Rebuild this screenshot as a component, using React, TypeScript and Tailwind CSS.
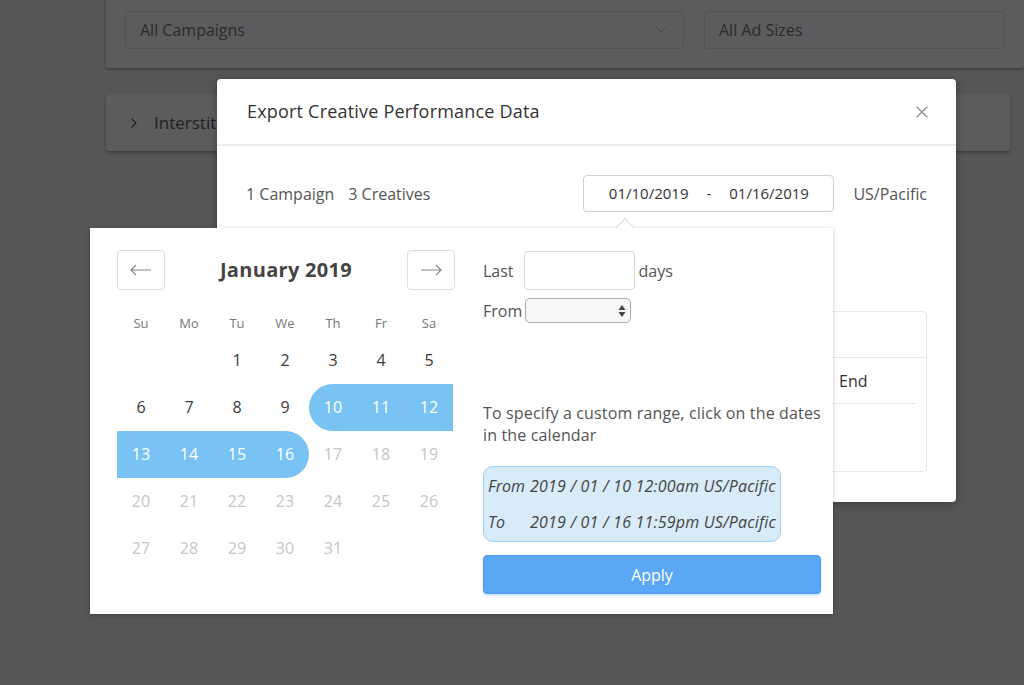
import { ChevronDown, ChevronRight, X } from 'lucide-react';

const weekdays = ['Su', 'Mo', 'Tu', 'We', 'Th', 'Fr', 'Sa'];
const rangeStart = 10;
const rangeEnd = 16;
const activeUntil = 16;

type Cell = number | null;
const cells: Cell[] = [null, null, ...Array.from({ length: 31 }, (_, i) => i + 1)];
const weeks: Cell[][] = [];
for (let i = 0; i < cells.length; i += 7) weeks.push(cells.slice(i, i + 7));

function DayCell({ day }: { day: Cell }) {
  if (day === null) return <div className="h-[47px]" />;
  const inRange = day >= rangeStart && day <= rangeEnd;
  const isStart = day === rangeStart;
  const isEnd = day === rangeEnd;
  const round = isStart ? 'rounded-l-[24px]' : isEnd ? 'rounded-r-[24px]' : '';
  const color = inRange ? 'bg-[#79c2f4] text-white' : day <= activeUntil ? 'text-[#3a3a3a]' : 'text-[#c6c6c6]';
  return (
    <div className={`flex h-[47px] items-center justify-center text-[16px] ${color} ${round}`}>{day}</div>
  );
}

export default function App() {
  return (
    <div className="relative h-[685px] w-[1024px] overflow-hidden bg-[#565658]" style={{ fontFamily: '"Open Sans", Lato, sans-serif' }}>
      {/* page behind the overlay */}
      <div className="flex flex-col gap-[26px] pl-[106px]">
        <div className="-mt-[10px] flex h-[78px] items-end gap-[20px] rounded-b-[3px] bg-[#5c5c5e] px-[19px] pb-[19px] shadow-[0_2px_3px_rgba(0,0,0,0.25)]">
          <div className="flex h-[38px] w-[559px] items-center justify-between rounded-[4px] border border-[#525254] px-[14px] text-[16px] text-[#2b2b2b]">
            <span>All Campaigns</span>
            <ChevronDown className="h-4 w-4 text-[#3f3f41]" strokeWidth={1.2} />
          </div>
          <div className="flex h-[38px] flex-1 items-center rounded-[4px] border border-[#525254] px-[14px] text-[16px] text-[#2b2b2b]">
            All Ad Sizes
          </div>
        </div>
        <div className="mr-[14px] flex h-[57px] items-center gap-[12px] rounded-[3px] bg-[#5c5c5e] px-[20px] text-[17px] text-[#222] shadow-[0_2px_3px_rgba(0,0,0,0.25)]">
          <ChevronRight className="h-4 w-4" strokeWidth={1.6} />
          <span>Interstitial</span>
        </div>
      </div>

      {/* modal */}
      <div className="absolute left-[217px] top-[79px] h-[423px] w-[739px] rounded-[4px] bg-white shadow-[0_2px_8px_rgba(0,0,0,0.3)]">
        <div className="flex h-[67px] items-center justify-between border-b-2 border-[#ececec] pl-[30px] pr-[24px]">
          <h2 className="text-[18px] tracking-[0.2px] text-[#333]">Export Creative Performance Data</h2>
          <X className="h-[20px] w-[20px] text-[#888]" strokeWidth={1.3} />
        </div>
        <div className="flex items-center pl-[29px] pr-[29px] pt-[29px]">
          <div className="flex gap-[14px] text-[16px] text-[#555]">
            <span>1 Campaign</span>
            <span>3 Creatives</span>
          </div>
          <div className="ml-auto flex h-[37px] w-[251px] items-center justify-center gap-[18px] rounded-[4px] border border-[#cfcfcf] text-[15px] text-[#333]">
            <span>01/10/2019</span>
            <span>-</span>
            <span>01/16/2019</span>
          </div>
          <span className="ml-[19px] text-[16px] text-[#555]">US/Pacific</span>
        </div>
        <div className="ml-[30px] mr-[29px] mt-[99px] h-[161px] rounded-[4px] border border-[#e6e6e6]">
          <div className="h-[46px] border-b border-[#e6e6e6]" />
          <div className="mx-[10px] flex h-[46px] items-center justify-end border-b border-[#e6e6e6] pr-[28px] text-[16px] text-[#333]">
            <span className="w-[49px]">End</span>
          </div>
        </div>
      </div>

      {/* date picker popover */}
      <div className="absolute left-[90px] top-[228px] flex h-[386px] w-[743px] gap-[28px] bg-white shadow-[0_1px_4px_rgba(0,0,0,0.25)]">
        <div className="absolute -top-[7px] left-[528px] h-[14px] w-[14px] rotate-45 border-l border-t border-[#dcdcdc] bg-white" />
        <div className="pl-[27px] pt-[22px]">
          <div className="flex w-[338px] items-center justify-between">
            <button className="flex h-[40px] w-[48px] items-center justify-center rounded-[4px] border border-[#dedede] text-[#888]">
              <svg width="22" height="12" viewBox="0 0 22 12" fill="none" stroke="currentColor" strokeWidth="1.2"><path d="M21 6H1M6 1L1 6l5 5" /></svg>
            </button>
            <span className="text-[20px] font-bold tracking-[0.3px] text-[#444]">January 2019</span>
            <button className="flex h-[40px] w-[48px] items-center justify-center rounded-[4px] border border-[#dedede] text-[#888]">
              <svg width="22" height="12" viewBox="0 0 22 12" fill="none" stroke="currentColor" strokeWidth="1.2"><path d="M1 6h20M16 1l5 5-5 5" /></svg>
            </button>
          </div>
          <div className="mt-[24px] grid w-[336px] grid-cols-7 text-[13px] text-[#777]">
            {weekdays.map((d) => <div key={d} className="text-center">{d}</div>)}
          </div>
          <div className="mt-[3px] w-[336px]">
            {weeks.map((w, i) => (
              <div key={i} className="grid grid-cols-7">
                {Array.from({ length: 7 }, (_, j) => <DayCell key={j} day={w[j] ?? null} />)}
              </div>
            ))}
          </div>
        </div>

        <div className="flex w-[338px] flex-col pt-[23px] text-[16px] text-[#555]">
          <div className="flex items-center gap-[10px]">
            <span>Last</span>
            <div className="h-[39px] w-[111px] rounded-[4px] border border-[#d6d6d6]" />
            <span className="-ml-[6px]">days</span>
          </div>
          <div className="mt-[8px] flex items-center gap-[3px]">
            <span>From</span>
            <div className="flex h-[25px] w-[106px] items-center justify-end rounded-[5px] border border-[#aaa] bg-[#f7f7f7] pr-[4px]">
              <svg width="8" height="14" viewBox="0 0 8 14" fill="#444"><path d="M4 1l3.5 5h-7zM4 13l3.5-5h-7z" /></svg>
            </div>
          </div>
          <p className="mt-[79px] leading-[22px] tracking-[0.15px]">To specify a custom range, click on the dates in the calendar</p>
          <div className="mt-[20px] w-[298px] rounded-[10px] border border-[#9dd0f4] bg-[#d8ebf8] px-[4px] py-[8px] text-[16px] italic text-[#444]">
            <div className="flex h-[22px] items-center">
              <span className="w-[42px]">From</span>
              <span className="tracking-[0.2px]">2019 / 01 / 10 12:00am US/Pacific</span>
            </div>
            <div className="mt-[14px] flex h-[22px] items-center">
              <span className="w-[42px]">To</span>
              <span className="tracking-[0.2px]">2019 / 01 / 16 11:59pm US/Pacific</span>
            </div>
          </div>
          <button className="mt-[13px] h-[39px] w-[338px] rounded-[4px] border border-[#4d9bef] bg-[#5aa7f6] text-[16px] text-white shadow-[0_2px_3px_rgba(90,167,246,0.3)]">Apply</button>
        </div>
      </div>
    </div>
  );
}
